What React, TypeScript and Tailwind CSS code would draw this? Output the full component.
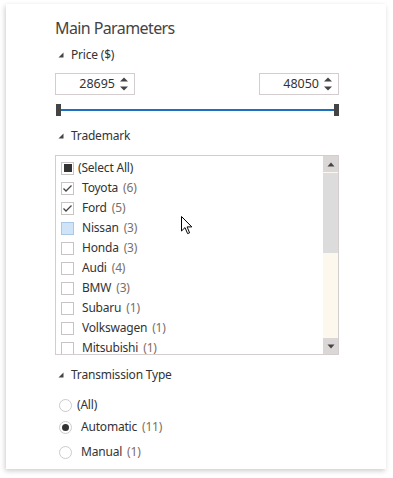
import React from "react";

const font = { fontFamily: '"Noto Sans", "Open Sans", sans-serif' };

function Tri() {
  return (
    <svg width="6" height="6" viewBox="0 0 6 6" className="shrink-0">
      <polygon points="5.5,0.5 5.5,5.5 0.5,5.5" fill="#444" />
    </svg>
  );
}

function Header({ label }: { label: string }) {
  return (
    <div className="flex items-center h-[16px] pl-[3px] gap-[7px]">
      <Tri />
      <span className="text-[12px] leading-[16px] text-[#333] tracking-[-0.2px]">{label}</span>
    </div>
  );
}

function Spin({ value }: { value: string }) {
  return (
    <div className="flex items-center w-[80px] h-[22px] border border-[#d3cdcd] bg-white">
      <span className="flex-1 text-right text-[12.5px] leading-[20px] text-[#333] pr-[4px]">{value}</span>
      <svg width="10" height="16" viewBox="0 0 10 16" className="mr-[5px]">
        <polygon points="5,1.5 9,5.5 1,5.5" fill="#444" />
        <polygon points="1,10.5 9,10.5 5,14.5" fill="#444" />
      </svg>
    </div>
  );
}

type Item = { name: string; count?: number; state: "ind" | "on" | "off" | "hover" };

const items: Item[] = [
  { name: "(Select All)", state: "ind" },
  { name: "Toyota", count: 6, state: "on" },
  { name: "Ford", count: 5, state: "on" },
  { name: "Nissan", count: 3, state: "hover" },
  { name: "Honda", count: 3, state: "off" },
  { name: "Audi", count: 4, state: "off" },
  { name: "BMW", count: 3, state: "off" },
  { name: "Subaru", count: 1, state: "off" },
  { name: "Volkswagen", count: 1, state: "off" },
  { name: "Mitsubishi", count: 1, state: "off" },
];

function Check({ state }: { state: Item["state"] }) {
  const hover = state === "hover";
  return (
    <div
      className={
        "w-[13px] h-[13px] border flex items-center justify-center shrink-0 " +
        (hover ? "border-[#a9c8e6] bg-[#cfe4f7]" : "border-[#c9c4c4] bg-white")
      }
    >
      {state === "ind" && <div className="w-[8px] h-[8px] bg-[#333]" />}
      {state === "on" && (
        <svg width="11" height="11" viewBox="0 0 11 11">
          <polyline points="1.5,5.5 4,8 9.5,2.5" fill="none" stroke="#444" strokeWidth="1.3" />
        </svg>
      )}
    </div>
  );
}

function Radio({ on }: { on?: boolean }) {
  return (
    <div className="w-[13px] h-[13px] rounded-full border border-[#cfcaca] bg-white flex items-center justify-center shrink-0">
      {on && <div className="w-[7px] h-[7px] rounded-full bg-[#333]" />}
    </div>
  );
}

export default function App() {
  return (
    <div className="w-[393px] h-[478px] bg-white pt-[4px] pl-[6px]" style={font}>
      <div className="w-[380px] h-[465px] bg-white shadow-[-1px_2px_5px_rgba(0,0,0,0.2)] pl-[49px] pr-[47px] pt-[13px] flex flex-col">
        <div className="text-[16px] leading-[22px] text-[#444] tracking-[-0.6px]">Main Parameters</div>
        <div className="mt-[8px]">
          <Header label="Price ($)" />
        </div>
        <div className="mt-[10px] flex justify-between">
          <Spin value="28695" />
          <Spin value="48050" />
        </div>
        <div className="mt-[9px] h-[12px] flex items-center pl-[1px]">
          <div className="w-[5px] h-[12px] bg-[#444]" />
          <div className="flex-1 h-[2px] bg-[#1f6fbf]" />
          <div className="w-[5px] h-[12px] bg-[#444]" />
        </div>
        <div className="mt-[12px]">
          <Header label="Trademark" />
        </div>
        <div className="relative mt-[11px] h-[200px] border border-[#d3cdcd] flex">
          <div className="flex-1 overflow-hidden pt-[2px]">
            {items.map((it, i) => (
              <div key={it.name} className="flex items-center h-[20px] pl-[5px]">
                <Check state={it.state} />
                <span
                  className={
                    "text-[12px] leading-[16px] text-[#333] whitespace-nowrap tracking-[-0.2px] " +
                    (i === 0 ? "ml-[4px]" : "ml-[8px]")
                  }
                >
                  {it.name}
                  {it.count !== undefined && (
                    <span className="text-[#7b6e68] ml-[5px]">({it.count})</span>
                  )}
                </span>
              </div>
            ))}
          </div>
          <div className="w-[15px] flex flex-col bg-[#fdf8ee]">
            <div className="h-[16px] bg-[#dcd7d7] flex items-center justify-center">
              <svg width="8" height="5" viewBox="0 0 8 5">
                <polygon points="4,0.5 7.5,4.5 0.5,4.5" fill="#444" />
              </svg>
            </div>
            <div className="h-[80px] bg-[#dcdcdc] mt-[1px]" />
            <div className="flex-1" />
            <div className="h-[16px] bg-[#dcd7d7] flex items-center justify-center">
              <svg width="8" height="5" viewBox="0 0 8 5">
                <polygon points="0.5,0.5 7.5,0.5 4,4.5" fill="#444" />
              </svg>
            </div>
          </div>
          <svg
            className="absolute left-[125px] top-[60px]"
            width="12"
            height="19"
            viewBox="0 0 12 19"
          >
            <path
              d="M0.5 0.5 L0.5 15 L4 11.6 L6.6 17.6 L8.6 16.8 L6.1 10.9 L10.8 10.9 Z"
              fill="#fff"
              stroke="#000"
              strokeWidth="1"
              strokeLinejoin="miter"
            />
          </svg>
        </div>
        <div className="mt-[12px]">
          <Header label="Transmission Type" />
        </div>
        <div className="mt-[12px] flex items-center h-[20px] pl-[4px]">
          <Radio />
          <span className="ml-[5px] text-[12px] leading-[16px] text-[#333] tracking-[-0.2px]">(All)</span>
        </div>
        <div className="mt-[2px] flex items-center h-[20px] pl-[4px]">
          <Radio on />
          <span className="ml-[9px] text-[12px] leading-[16px] text-[#333] tracking-[-0.2px]">
            Automatic<span className="text-[#7b6e68] ml-[5px]">(11)</span>
          </span>
        </div>
        <div className="mt-[5px] flex items-center h-[20px] pl-[4px]">
          <Radio />
          <span className="ml-[9px] text-[12px] leading-[16px] text-[#333] tracking-[-0.2px]">
            Manual<span className="text-[#7b6e68] ml-[5px]">(1)</span>
          </span>
        </div>
      </div>
    </div>
  );
}
